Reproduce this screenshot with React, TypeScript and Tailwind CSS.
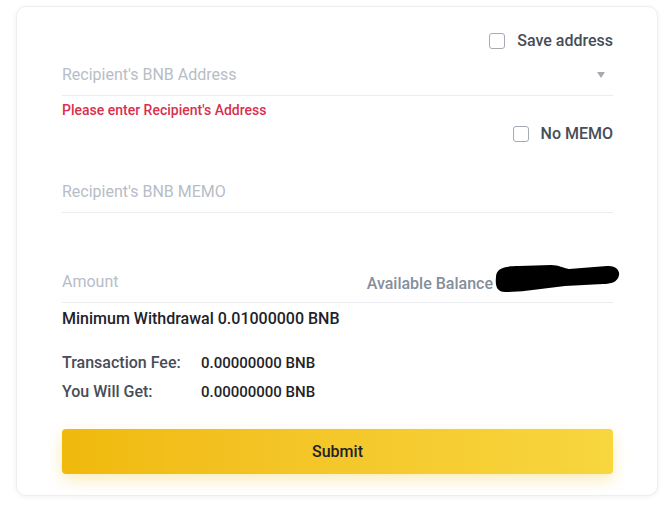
import React from "react"

function Checkbox({ label }: { label: string }) {
  return (
    <label className="flex items-center gap-3 text-[16px] font-medium leading-[20px] text-[#474d57]">
      <span className="h-[16px] w-[16px] rounded-[3px] border border-[#a5abb3] bg-white" />
      {label}
    </label>
  )
}

function Scribble() {
  return (
    <svg
      className="absolute left-full top-[-12px]"
      width="128"
      height="32"
      viewBox="0 0 128 32"
    >
      <path
        d="M3 15 C3 6, 12 4, 26 4 L58 3 C66 3, 70 6, 76 7 L114 4 C123 3, 127 9, 126 13 C125 20, 118 22, 110 22 L72 24 C52 26, 32 30, 12 30 C4 30, 2 24, 3 15 Z"
        fill="#000"
      />
    </svg>
  )
}

export default function App() {
  return (
    <div
      className="h-[516px] w-[672px] bg-white pl-[16px] pt-[6px]"
      style={{ fontFamily: "Roboto, 'Noto Sans', sans-serif" }}
    >
      <div className="h-[490px] w-[642px] rounded-[10px] border border-[#eceef1] bg-white pl-[45px] pr-[44px] pt-[24px] shadow-[0_1px_5px_rgba(0,0,0,0.06)]">
        <div className="flex justify-end">
          <Checkbox label="Save address" />
        </div>

        <div className="mt-[14px] flex items-center justify-between border-b border-[#eaecef] pb-[10px]">
          <span className="text-[16px] leading-[20px] text-[#b7bdc6]">{"Recipient's BNB Address"}</span>
          <span className="mr-[8px] h-0 w-0 border-x-[4px] border-t-[6px] border-x-transparent border-t-[#a5abb3]" />
        </div>
        <p className="mt-[6px] text-[14px] font-medium leading-[16px] text-[#d9304e]">
          {"Please enter Recipient's Address"}
        </p>

        <div className="mt-[6px] flex justify-end">
          <Checkbox label="No MEMO" />
        </div>

        <div className="mt-[38px] border-b border-[#eaecef] pb-[10px] leading-[20px]">
          <span className="text-[16px] leading-[20px] text-[#b7bdc6]">{"Recipient's BNB MEMO"}</span>
        </div>

        <div className="mt-[59px] flex items-start justify-between border-b border-[#eaecef] pb-[8px]">
          <span className="text-[16px] leading-[20px] text-[#b7bdc6]">Amount</span>
          <span className="relative mr-[120px] mt-[2px] text-[16px] font-medium leading-[20px] text-[#848e9c]">
            Available Balance
            <Scribble />
          </span>
        </div>

        <p className="mt-[6px] text-[16px] font-medium leading-[20px] text-[#1e2329]">
          Minimum Withdrawal 0.01000000 BNB
        </p>

        <div className="mt-[24px] flex flex-col gap-[9px] font-medium leading-[20px]">
          <div className="flex items-center">
            <span className="w-[139px] text-[16px] text-[#474d57]">Transaction Fee:</span>
            <span className="text-[15px] text-[#1e2329]">0.00000000 BNB</span>
          </div>
          <div className="flex items-center">
            <span className="w-[139px] text-[16px] text-[#474d57]">You Will Get:</span>
            <span className="text-[15px] text-[#1e2329]">0.00000000 BNB</span>
          </div>
        </div>

        <button className="mt-[27px] flex h-[45px] w-full items-center justify-center rounded-[4px] bg-gradient-to-r from-[#f0b90b] to-[#f8d63e] text-[16px] font-medium text-[#1e2329] shadow-[0_6px_16px_rgba(240,185,11,0.28)]">
          Submit
        </button>
      </div>
    </div>
  )
}
